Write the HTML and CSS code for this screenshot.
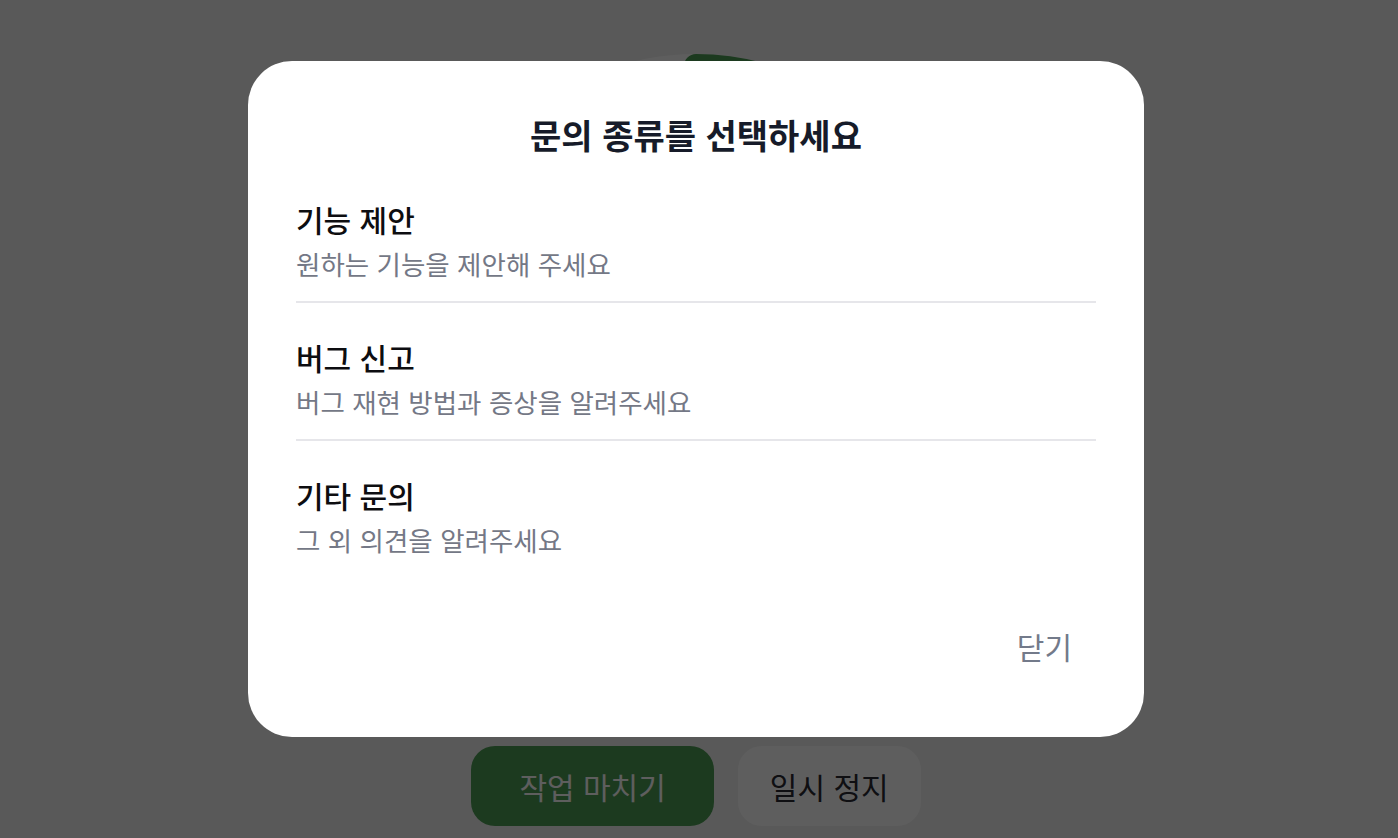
FILE: index.html
```html
<!DOCTYPE html>
<html lang="ko">
<head>
<meta charset="utf-8">
<title>문의</title>
<link rel="stylesheet" href="styles.css">
</head>
<body>
<main class="page">
  <div class="timer">
    <svg class="ring" width="520" height="520" viewBox="0 0 520 520">
      <circle cx="260" cy="260" r="248" fill="none" stroke="#ffffff" stroke-width="24"/>
      <path d="M260 12 A248 248 0 0 1 489 165" fill="none" stroke="#4c9d54" stroke-width="24" stroke-linecap="round"/>
    </svg>
  </div>
  <div class="actions">
    <button class="btn btn-primary">작업 마치기</button>
    <button class="btn btn-secondary">일시 정지</button>
  </div>
</main>

<div class="overlay">
  <div class="dialog">
    <h2 class="dialog-title">문의 종류를 선택하세요</h2>
    <ul class="options">
      <li class="option">
        <div class="option-title">기능 제안</div>
        <div class="option-desc">원하는 기능을 제안해 주세요</div>
      </li>
      <li class="option">
        <div class="option-title">버그 신고</div>
        <div class="option-desc">버그 재현 방법과 증상을 알려주세요</div>
      </li>
      <li class="option">
        <div class="option-title">기타 문의</div>
        <div class="option-desc">그 외 의견을 알려주세요</div>
      </li>
    </ul>
    <div class="dialog-footer">
      <button class="close-btn">닫기</button>
    </div>
  </div>
</div>
</body>
</html>
```

FILE: styles.css
```css
* { box-sizing: border-box; }
html, body {
  margin: 0;
  padding: 0;
  width: 100%;
  height: 100%;
  overflow: hidden;
}
body {
  background: #f2f2f2;
  font-family: "Noto Sans CJK KR", "Noto Sans", sans-serif;
}
.page {
  height: 838px;
  display: flex;
  flex-direction: column;
  align-items: center;
  padding-top: 54px;
  padding-right: 6px;
}
.timer {
  width: 520px;
  height: 520px;
}
.ring { display: block; }
.actions {
  margin-top: 172px;
  display: flex;
  gap: 24px;
}
.btn {
  height: 80px;
  border: none;
  border-radius: 24px;
  font-family: inherit;
  font-size: 30px;
  font-weight: 400;
  line-height: 36px;
}
.btn-primary {
  background: #4c9d54;
  color: #ffffff;
  padding: 0 48px;
}
.btn-secondary {
  background: #ffffff;
  color: #2a2a33;
  padding: 0 32px;
}
.overlay {
  position: fixed;
  inset: 0;
  background: rgba(0, 0, 0, 0.63);
  display: flex;
  align-items: center;
  justify-content: center;
  padding-bottom: 40px;
  padding-right: 6px;
}
.dialog {
  width: 896px;
  background: #ffffff;
  border-radius: 44px;
  padding: 52px 48px 65px;
}
.dialog-title {
  margin: 0 0 8px;
  text-align: center;
  font-size: 34px;
  line-height: 44px;
  font-weight: 700;
  color: #161b29;
}
.options {
  list-style: none;
  margin: 0;
  padding: 0;
}
.option {
  display: flex;
  flex-direction: column;
  gap: 9px;
  padding: 36px 0 19px;
  border-bottom: 2px solid #e6e6ea;
}
.option:last-child { border-bottom: none; }
.option-title {
  font-size: 30px;
  line-height: 36px;
  font-weight: 500;
  color: #0d0d10;
}
.option-desc {
  font-size: 26.5px;
  line-height: 36px;
  font-weight: 400;
  color: #747886;
}
.dialog-footer {
  margin-top: 43px;
  display: flex;
  justify-content: flex-end;
}
.close-btn {
  background: none;
  border: none;
  padding: 8px 24px;
  font-family: inherit;
  font-size: 30px;
  line-height: 36px;
  font-weight: 400;
  color: #737a8a;
}
```
